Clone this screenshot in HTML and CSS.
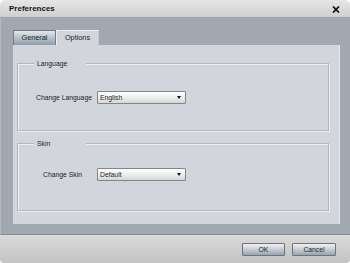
FILE: index.html
```html
<!DOCTYPE html>
<html>
<head>
    <meta charset="utf-8" />
    <title>Preferences</title>
    <link rel="stylesheet" href="styles.css">
</head>
<body>
    <div class="window">
        <div class="titlebar">
            <span class="title">Preferences</span>
            <svg class="close" width="8" height="7" viewBox="0 0 8 7">
                <path d="M1 0.5 L7 6.5 M7 0.5 L1 6.5" stroke="#111" stroke-width="1.7" fill="none"/>
            </svg>
        </div>
        <div class="content">
            <div class="tabs">
                <div class="tab">General</div>
                <div class="tab tab-active">Options</div>
            </div>
            <div class="panel">
                <div class="group group-language">
                    <span class="group-title">Language</span>
                    <div class="row">
                        <span class="label">Change Language</span>
                        <div class="combo">
                            <span>English</span>
                            <i class="combo-arrow"></i>
                        </div>
                    </div>
                </div>
                <div class="group group-skin">
                    <span class="group-title">Skin</span>
                    <div class="row">
                        <span class="label label-skin">Change Skin</span>
                        <div class="combo">
                            <span>Default</span>
                            <i class="combo-arrow"></i>
                        </div>
                    </div>
                </div>
            </div>
        </div>
        <div class="footer">
            <button class="btn btn-ok">OK</button>
            <button class="btn btn-cancel">Cancel</button>
        </div>
    </div>
</body>
</html>
```
FILE: styles.css
```css
body{
    margin:0;
    background:#fff;
    font-family:"Liberation Sans", Arial, sans-serif;
    color:#1e2228;
}
.window{
    width:350px;
    height:263px;
    display:flex;
    flex-direction:column;
    border-radius:5px 5px 4px 4px;
    overflow:hidden;
}
.titlebar{
    height:17px;
    flex:none;
    display:flex;
    align-items:center;
    justify-content:space-between;
    padding:0 10px 0 9px;
    background:linear-gradient(#e6e6e6, #cfcfcf);
    border-bottom:1px solid #9da2a9;
}
.title{
    font-size:8px;
    font-weight:bold;
    color:#151515;
}
.close{
    display:block;
    margin-top:1px;
}
.content{
    flex:1;
    display:flex;
    flex-direction:column;
    background:#a1a8b2;
    padding:12px 10px 10px 12px;
    border-left:1px solid #b3b9c1;
    border-bottom:1px solid #868c95;
}
.tabs{
    display:flex;
    height:15px;
}
.tab{
    width:43px;
    box-sizing:border-box;
    font-size:7.3px;
    line-height:13px;
    text-align:center;
    border:1px solid #6f7b87;
    border-bottom:none;
    background:linear-gradient(#e2e7ec, #b4bec8 55%, #8e9caa);
    color:#1a1f25;
}
.tab-active{
    background:#d2d5dc;
    border-color:#eef0f3 #c4c8cf #d2d5dc #eef0f3;
    height:15px;
}
.panel{
    flex:1;
    background:#d2d5dc;
    border-right:1px solid #e6e8ec;
    padding:18px 10px 13px 4px;
    display:flex;
    flex-direction:column;
    gap:12px;
}
.group{
    position:relative;
    height:68px;
    box-sizing:border-box;
    border:1px solid #b2b6be;
    box-shadow:inset 1px 1px 0 #eceef2, 1px 1px 0 #eceef2;
    display:flex;
    align-items:center;
}
.group-skin{
    padding-bottom:5px;
}
.group-title{
    position:absolute;
    top:-5px;
    left:16px;
    width:52px;
    padding-left:3px;
    box-sizing:border-box;
    background:#d2d5dc;
    font-size:6.8px;
    line-height:9px;
}
.row{
    display:flex;
    align-items:center;
    padding-left:18px;
}
.label{
    width:61px;
    font-size:6.8px;
}
.label-skin{
    padding-left:7px;
    width:54px;
}
.combo{
    position:relative;
    width:89px;
    height:13px;
    box-sizing:border-box;
    border:1px solid #80848c;
    border-radius:1px;
    background:linear-gradient(#ffffff, #eeeeee 50%, #d6d6d6);
    font-size:6.8px;
    line-height:11px;
    padding-left:2px;
}
.combo-arrow{
    position:absolute;
    right:4px;
    top:4px;
    width:0;
    height:0;
    border-left:2.5px solid transparent;
    border-right:2.5px solid transparent;
    border-top:3px solid #111;
}
.footer{
    flex:none;
    height:28px;
    display:flex;
    align-items:center;
    justify-content:flex-end;
    gap:7px;
    padding-right:14px;
    background:linear-gradient(#dadada, #c3c3c3);
}
.btn{
    height:13px;
    padding:0;
    border:1px solid #6c737c;
    border-radius:1px;
    background:linear-gradient(#eef1f4, #c6ccd3 50%, #9aa3ad);
    font-family:"Liberation Sans", Arial, sans-serif;
    font-size:6.8px;
    color:#1a1f25;
    margin-top:1px;
}
.btn-ok{
    width:43px;
}
.btn-cancel{
    width:44px;
}
```
